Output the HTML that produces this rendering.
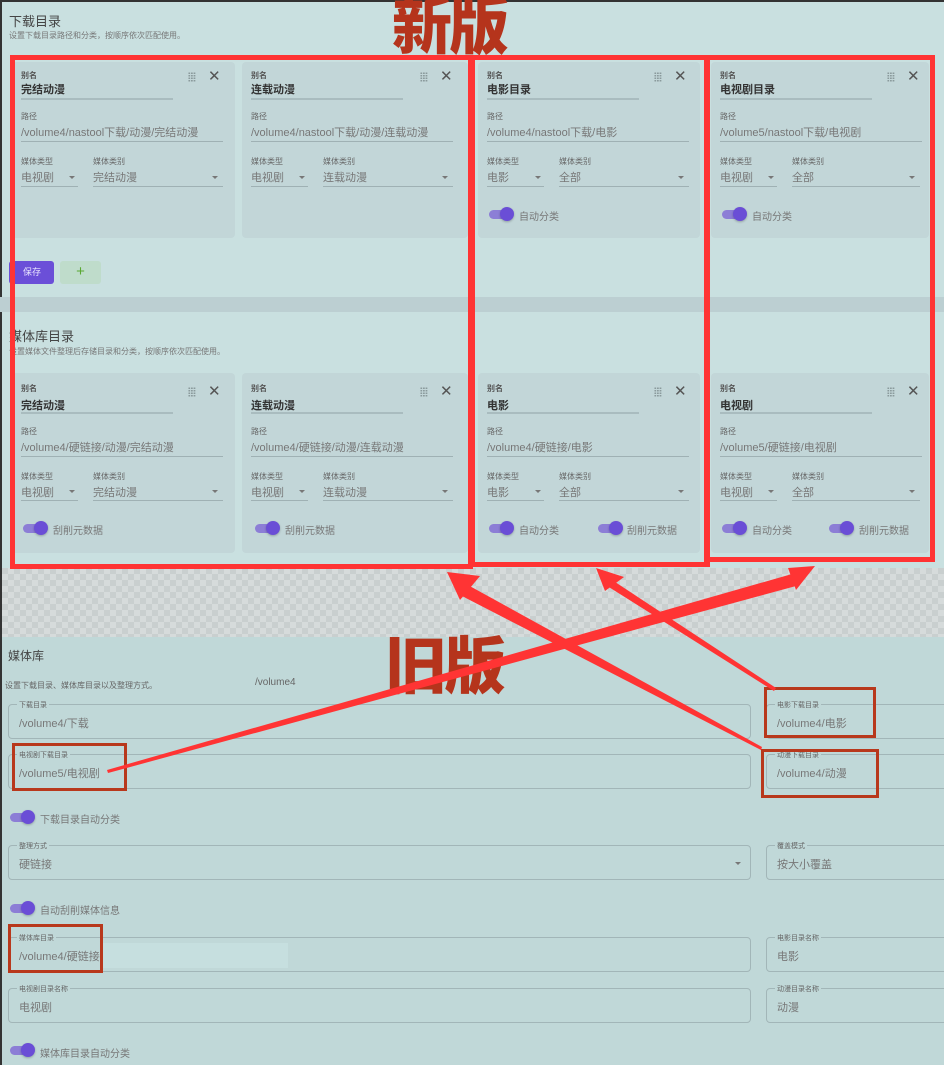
<!DOCTYPE html>
<html><head><meta charset="utf-8">
<style>
*{margin:0;padding:0;box-sizing:border-box}
body{width:944px;height:1065px;position:relative;overflow:hidden;background:#c9e0e0;font-family:"Liberation Sans","Noto Sans CJK SC",sans-serif;color:#555}
.a{position:absolute;white-space:nowrap}
.card{position:absolute;background:#c2d6d8;border-radius:4px}
.card .lb{position:absolute;left:9px;font-size:8px;color:#666}
.card .lbb{font-weight:bold;color:#555}
.card .v{position:absolute;left:9px;font-size:11px;color:#777}
.card .vb{font-weight:bold;color:#333}
.card .ul{position:absolute;height:1px;background:#9fb1b4}
.card .ulb{height:2px;background:#a9bcbf}
.grip{position:absolute;width:8px;height:10px;background-image:radial-gradient(#8a9a9c 45%,transparent 50%);background-size:2.6px 2.5px}
.x{position:absolute;font-size:15px;color:#555;line-height:1}
.caret{position:absolute;width:0;height:0;border-left:3px solid transparent;border-right:3px solid transparent;border-top:3px solid #777}
.tg{position:absolute;width:25px;height:14px}
.tg:before{content:"";position:absolute;left:1px;top:3px;width:22px;height:9px;border-radius:5px;background:#8c7ed6}
.tg:after{content:"";position:absolute;left:12px;top:0;width:14px;height:14px;border-radius:50%;background:#6a4ed6;box-shadow:0 1px 2px rgba(0,0,0,.25)}
.tl{position:absolute;font-size:10px;color:#777}
.rb{position:absolute;border:5px solid #ff3434}
.db{position:absolute;border:3px solid #b8381c}
.fld{position:absolute;border:1px solid #a2b6b8;border-radius:4px}
.fl{position:absolute;font-size:7px;color:#666;background:#c0d8d8;padding:0 2px;top:-5px;left:8px}
.fv{position:absolute;font-size:11px;color:#777;left:10px}
</style></head><body>
<div class="a" style="left:0;top:0;width:944px;height:2px;background:#333"></div>
<div class="a" style="left:0;top:0;width:2px;height:1065px;background:#333"></div>

<div class="a" style="left:9px;top:11px;font-size:13px;color:#444">下载目录</div>
<div class="a" style="left:9px;top:30px;font-size:8px;color:#777">设置下载目录路径和分类，按顺序依次匹配使用。</div>

<div class="card" style="left:12px;top:62px;width:223px;height:176px">
<div class="lb lbb" style="top:8px">别名</div><div class="v vb" style="top:19px">完结动漫</div><div class="ul ulb" style="left:9px;top:36px;width:152px"></div>
<div class="grip" style="left:176px;top:10px"></div><div class="x" style="left:196px;top:7px">✕</div>
<div class="lb" style="top:49px">路径</div><div class="v" style="top:62px">/volume4/nastool下载/动漫/完结动漫</div><div class="ul" style="left:9px;top:79px;width:202px"></div>
<div class="lb" style="top:94px">媒体类型</div><div class="v" style="top:107px">电视剧</div><div class="ul" style="left:9px;top:124px;width:57px"></div><div class="caret" style="left:57px;top:114px"></div>
<div class="lb" style="left:81px;top:94px">媒体类别</div><div class="v" style="left:81px;top:107px">完结动漫</div><div class="ul" style="left:81px;top:124px;width:130px"></div><div class="caret" style="left:200px;top:114px"></div>
</div>
<div class="card" style="left:242px;top:62px;width:226px;height:176px">
<div class="lb lbb" style="top:8px">别名</div><div class="v vb" style="top:19px">连载动漫</div><div class="ul ulb" style="left:9px;top:36px;width:152px"></div>
<div class="grip" style="left:178px;top:10px"></div><div class="x" style="left:198px;top:7px">✕</div>
<div class="lb" style="top:49px">路径</div><div class="v" style="top:62px">/volume4/nastool下载/动漫/连载动漫</div><div class="ul" style="left:9px;top:79px;width:202px"></div>
<div class="lb" style="top:94px">媒体类型</div><div class="v" style="top:107px">电视剧</div><div class="ul" style="left:9px;top:124px;width:57px"></div><div class="caret" style="left:57px;top:114px"></div>
<div class="lb" style="left:81px;top:94px">媒体类别</div><div class="v" style="left:81px;top:107px">连载动漫</div><div class="ul" style="left:81px;top:124px;width:130px"></div><div class="caret" style="left:200px;top:114px"></div>
</div>
<div class="card" style="left:478px;top:62px;width:222px;height:176px">
<div class="lb lbb" style="top:8px">别名</div><div class="v vb" style="top:19px">电影目录</div><div class="ul ulb" style="left:9px;top:36px;width:152px"></div>
<div class="grip" style="left:176px;top:10px"></div><div class="x" style="left:196px;top:7px">✕</div>
<div class="lb" style="top:49px">路径</div><div class="v" style="top:62px">/volume4/nastool下载/电影</div><div class="ul" style="left:9px;top:79px;width:202px"></div>
<div class="lb" style="top:94px">媒体类型</div><div class="v" style="top:107px">电影</div><div class="ul" style="left:9px;top:124px;width:57px"></div><div class="caret" style="left:57px;top:114px"></div>
<div class="lb" style="left:81px;top:94px">媒体类别</div><div class="v" style="left:81px;top:107px">全部</div><div class="ul" style="left:81px;top:124px;width:130px"></div><div class="caret" style="left:200px;top:114px"></div>
<div class="tg" style="left:10px;top:145px"></div><div class="tl" style="left:41px;top:146px">自动分类</div>
</div>
<div class="card" style="left:711px;top:62px;width:218px;height:176px">
<div class="lb lbb" style="top:8px">别名</div><div class="v vb" style="top:19px">电视剧目录</div><div class="ul ulb" style="left:9px;top:36px;width:152px"></div>
<div class="grip" style="left:176px;top:10px"></div><div class="x" style="left:196px;top:7px">✕</div>
<div class="lb" style="top:49px">路径</div><div class="v" style="top:62px">/volume5/nastool下载/电视剧</div><div class="ul" style="left:9px;top:79px;width:202px"></div>
<div class="lb" style="top:94px">媒体类型</div><div class="v" style="top:107px">电视剧</div><div class="ul" style="left:9px;top:124px;width:57px"></div><div class="caret" style="left:57px;top:114px"></div>
<div class="lb" style="left:81px;top:94px">媒体类别</div><div class="v" style="left:81px;top:107px">全部</div><div class="ul" style="left:81px;top:124px;width:128px"></div><div class="caret" style="left:198px;top:114px"></div>
<div class="tg" style="left:10px;top:145px"></div><div class="tl" style="left:41px;top:146px">自动分类</div>
</div>

<div class="a" style="left:9px;top:261px;width:45px;height:23px;background:#6b4fd8;border-radius:3px;color:#e8e4ff;font-size:9px;line-height:23px;padding-left:14px">保存</div>
<div class="a" style="left:60px;top:261px;width:41px;height:23px;background:#bfdccb;border-radius:3px;color:#5aa832;font-size:15px;line-height:22px;text-align:center">+</div>

<div class="a" style="left:0;top:297px;width:944px;height:15px;background:#bccfd2"></div>

<div class="a" style="left:9px;top:326px;font-size:13px;color:#444">媒体库目录</div>
<div class="a" style="left:9px;top:346px;font-size:8px;color:#777">设置媒体文件整理后存储目录和分类，按顺序依次匹配使用。</div>

<div class="card" style="left:12px;top:373px;width:223px;height:180px">
<div class="lb lbb" style="top:10px">别名</div><div class="v vb" style="top:24px">完结动漫</div><div class="ul ulb" style="left:9px;top:39px;width:152px"></div>
<div class="grip" style="left:176px;top:14px"></div><div class="x" style="left:196px;top:11px">✕</div>
<div class="lb" style="top:53px">路径</div><div class="v" style="top:66px">/volume4/硬链接/动漫/完结动漫</div><div class="ul" style="left:9px;top:83px;width:202px"></div>
<div class="lb" style="top:98px">媒体类型</div><div class="v" style="top:111px">电视剧</div><div class="ul" style="left:9px;top:127px;width:57px"></div><div class="caret" style="left:57px;top:117px"></div>
<div class="lb" style="left:81px;top:98px">媒体类别</div><div class="v" style="left:81px;top:111px">完结动漫</div><div class="ul" style="left:81px;top:127px;width:130px"></div><div class="caret" style="left:200px;top:117px"></div>
<div class="tg" style="left:10px;top:148px"></div><div class="tl" style="left:41px;top:149px">刮削元数据</div>
</div>
<div class="card" style="left:242px;top:373px;width:226px;height:180px">
<div class="lb lbb" style="top:10px">别名</div><div class="v vb" style="top:24px">连载动漫</div><div class="ul ulb" style="left:9px;top:39px;width:152px"></div>
<div class="grip" style="left:178px;top:14px"></div><div class="x" style="left:198px;top:11px">✕</div>
<div class="lb" style="top:53px">路径</div><div class="v" style="top:66px">/volume4/硬链接/动漫/连载动漫</div><div class="ul" style="left:9px;top:83px;width:202px"></div>
<div class="lb" style="top:98px">媒体类型</div><div class="v" style="top:111px">电视剧</div><div class="ul" style="left:9px;top:127px;width:57px"></div><div class="caret" style="left:57px;top:117px"></div>
<div class="lb" style="left:81px;top:98px">媒体类别</div><div class="v" style="left:81px;top:111px">连载动漫</div><div class="ul" style="left:81px;top:127px;width:130px"></div><div class="caret" style="left:200px;top:117px"></div>
<div class="tg" style="left:12px;top:148px"></div><div class="tl" style="left:43px;top:149px">刮削元数据</div>
</div>
<div class="card" style="left:478px;top:373px;width:222px;height:180px">
<div class="lb lbb" style="top:10px">别名</div><div class="v vb" style="top:24px">电影</div><div class="ul ulb" style="left:9px;top:39px;width:152px"></div>
<div class="grip" style="left:176px;top:14px"></div><div class="x" style="left:196px;top:11px">✕</div>
<div class="lb" style="top:53px">路径</div><div class="v" style="top:66px">/volume4/硬链接/电影</div><div class="ul" style="left:9px;top:83px;width:202px"></div>
<div class="lb" style="top:98px">媒体类型</div><div class="v" style="top:111px">电影</div><div class="ul" style="left:9px;top:127px;width:57px"></div><div class="caret" style="left:57px;top:117px"></div>
<div class="lb" style="left:81px;top:98px">媒体类别</div><div class="v" style="left:81px;top:111px">全部</div><div class="ul" style="left:81px;top:127px;width:130px"></div><div class="caret" style="left:200px;top:117px"></div>
<div class="tg" style="left:10px;top:148px"></div><div class="tl" style="left:41px;top:149px">自动分类</div>
<div class="tg" style="left:119px;top:148px"></div><div class="tl" style="left:149px;top:149px">刮削元数据</div>
</div>
<div class="card" style="left:711px;top:373px;width:218px;height:180px">
<div class="lb lbb" style="top:10px">别名</div><div class="v vb" style="top:24px">电视剧</div><div class="ul ulb" style="left:9px;top:39px;width:152px"></div>
<div class="grip" style="left:176px;top:14px"></div><div class="x" style="left:196px;top:11px">✕</div>
<div class="lb" style="top:53px">路径</div><div class="v" style="top:66px">/volume5/硬链接/电视剧</div><div class="ul" style="left:9px;top:83px;width:202px"></div>
<div class="lb" style="top:98px">媒体类型</div><div class="v" style="top:111px">电视剧</div><div class="ul" style="left:9px;top:127px;width:57px"></div><div class="caret" style="left:57px;top:117px"></div>
<div class="lb" style="left:81px;top:98px">媒体类别</div><div class="v" style="left:81px;top:111px">全部</div><div class="ul" style="left:81px;top:127px;width:128px"></div><div class="caret" style="left:198px;top:117px"></div>
<div class="tg" style="left:10px;top:148px"></div><div class="tl" style="left:41px;top:149px">自动分类</div>
<div class="tg" style="left:117px;top:148px"></div><div class="tl" style="left:148px;top:149px">刮削元数据</div>
</div>

<div class="a" style="left:2px;top:568px;width:942px;height:69px;background-color:#c9cfcf;background-image:linear-gradient(45deg,#d6dbdb 25%,transparent 25%,transparent 75%,#d6dbdb 75%),linear-gradient(45deg,#d6dbdb 25%,transparent 25%,transparent 75%,#d6dbdb 75%);background-size:12px 12px;background-position:0 0,6px 6px"></div>

<div class="a" style="left:2px;top:637px;width:942px;height:428px;background:#c0d8d8"></div>
<div class="a" style="left:8px;top:647px;font-size:12px;color:#444">媒体库</div>
<div class="a" style="left:5px;top:680px;font-size:8px;color:#666">设置下载目录、媒体库目录以及整理方式。</div>
<div class="a" style="left:255px;top:677px;font-size:10px;color:#666">/volume4</div>

<div class="fld" style="left:8px;top:704px;width:743px;height:35px"><div class="fl">下载目录</div><div class="fv" style="top:10px">/volume4/下载</div></div>
<div class="fld" style="left:766px;top:704px;width:190px;height:35px"><div class="fl">电影下载目录</div><div class="fv" style="top:10px">/volume4/电影</div></div>
<div class="fld" style="left:8px;top:754px;width:743px;height:35px"><div class="fl">电视剧下载目录</div><div class="fv" style="top:10px">/volume5/电视剧</div></div>
<div class="fld" style="left:766px;top:754px;width:190px;height:35px"><div class="fl">动漫下载目录</div><div class="fv" style="top:10px">/volume4/动漫</div></div>
<div class="tg" style="left:9px;top:810px"></div><div class="tl" style="left:40px;top:811px">下载目录自动分类</div>
<div class="fld" style="left:8px;top:845px;width:743px;height:35px"><div class="fl">整理方式</div><div class="fv" style="top:10px">硬链接</div><div class="caret" style="left:726px;top:16px"></div></div>
<div class="fld" style="left:766px;top:845px;width:190px;height:35px"><div class="fl">覆盖模式</div><div class="fv" style="top:10px">按大小覆盖</div></div>
<div class="tg" style="left:9px;top:901px"></div><div class="tl" style="left:40px;top:902px">自动刮削媒体信息</div>
<div class="fld" style="left:8px;top:937px;width:743px;height:35px"><div class="fl">媒体库目录</div><div class="a" style="left:92px;top:5px;width:187px;height:25px;background:#c6dfdf"></div><div class="fv" style="top:10px">/volume4/硬链接</div></div>
<div class="fld" style="left:766px;top:937px;width:190px;height:35px"><div class="fl">电影目录名称</div><div class="fv" style="top:10px">电影</div></div>
<div class="fld" style="left:8px;top:988px;width:743px;height:35px"><div class="fl">电视剧目录名称</div><div class="fv" style="top:10px">电视剧</div></div>
<div class="fld" style="left:766px;top:988px;width:190px;height:35px"><div class="fl">动漫目录名称</div><div class="fv" style="top:10px">动漫</div></div>
<div class="tg" style="left:9px;top:1043px"></div><div class="tl" style="left:40px;top:1045px">媒体库目录自动分类</div>

<div class="a" style="left:392px;top:-8px;font-size:60px;font-weight:900;color:#b5341c;letter-spacing:-3px;line-height:1;font-family:'Noto Sans CJK SC',sans-serif;transform:scaleY(1.05)">新版</div>
<div class="a" style="left:385px;top:630px;font-size:62px;font-weight:900;color:#b5341c;letter-spacing:-3px;line-height:1;font-family:'Noto Sans CJK SC',sans-serif">旧版</div>

<div class="rb" style="left:10px;top:55px;width:463px;height:514px"></div>
<div class="rb" style="left:470px;top:55px;width:240px;height:512px"></div>
<div class="rb" style="left:704px;top:55px;width:231px;height:507px"></div>

<div class="db" style="left:12px;top:743px;width:115px;height:48px"></div>
<div class="db" style="left:764px;top:687px;width:112px;height:51px"></div>
<div class="db" style="left:761px;top:749px;width:118px;height:49px"></div>
<div class="db" style="left:8px;top:924px;width:95px;height:49px"></div>

<svg class="a" style="left:0;top:0" width="944" height="1065" viewBox="0 0 944 1065">
<g fill="#ff3434">
<polygon points="762,747 761,750 460,595 466,584"/>
<polygon points="447,572 480,576 460,600"/>
<polygon points="776,688 774,691 604,584 609,578"/>
<polygon points="596,568 624,577 605,591"/>
<polygon points="108,773 107,770 792,574 796,586"/>
<polygon points="815,566 788,568 796,590"/>
</g>
</svg>
</body></html>
